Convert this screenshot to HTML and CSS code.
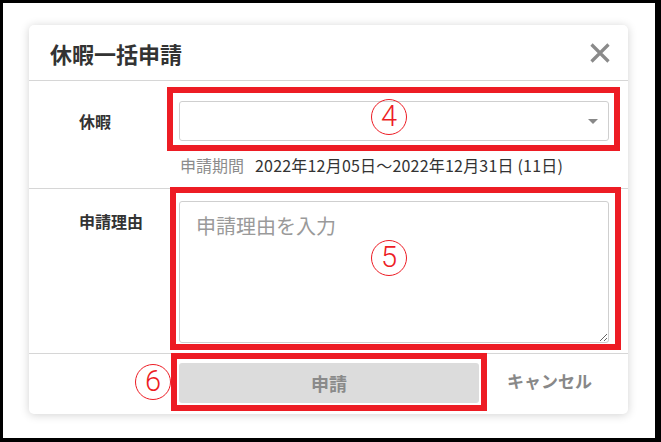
FILE: index.html
```html
<!DOCTYPE html>
<html lang="ja">
<head>
<meta charset="utf-8">
<title>休暇一括申請</title>
<link rel="stylesheet" href="styles.css">
</head>
<body>
<div class="frame">
  <div class="modal">
    <div class="modal-header">
      <h1 class="modal-title">休暇一括申請</h1>
      <button class="close-btn" aria-label="閉じる">
        <svg width="20" height="20" viewBox="0 0 20 20"><path d="M1.5 1.5 L18.5 18.5 M18.5 1.5 L1.5 18.5" stroke="#8a8a8a" stroke-width="3.2" fill="none"/></svg>
      </button>
    </div>
    <div class="row row-leave">
      <div class="label">休暇</div>
      <div class="field">
        <div class="select-wrap">
          <div class="select"><span class="caret"></span></div>
          <span class="mark-box mark-box-4"></span>
          <span class="mark-num mark-num-4">4</span>
        </div>
        <div class="period"><span class="period-label">申請期間</span><span class="period-value">2022年12月05日～2022年12月31日 (11日)</span></div>
      </div>
    </div>
    <div class="row row-reason">
      <div class="label">申請理由</div>
      <div class="field">
        <div class="textarea-wrap">
          <textarea class="reason" placeholder="申請理由を入力"></textarea>
          <span class="mark-box mark-box-5"></span>
          <span class="mark-num mark-num-5">5</span>
        </div>
      </div>
    </div>
    <div class="modal-footer">
      <div class="submit-wrap">
        <button class="submit-btn">申請</button>
        <span class="mark-box mark-box-6"></span>
        <span class="mark-num mark-num-6">6</span>
      </div>
      <button class="cancel-btn">キャンセル</button>
    </div>
  </div>
</div>
</body>
</html>
```
FILE: styles.css
```css
html, body {
  margin: 0;
  padding: 0;
  background: #fff;
}
body {
  font-family: "Noto Sans CJK JP", "Noto Sans", sans-serif;
  color: #333;
}
.frame {
  box-sizing: border-box;
  width: 661px;
  height: 442px;
  border-style: solid;
  border-color: #000;
  border-width: 3px 6px 4px 3px;
  padding: 22px 0 0 26px;
  background: #fff;
  overflow: hidden;
}
.modal {
  width: 599px;
  background: #fff;
  border-radius: 5px;
  box-shadow: 0 1px 10px rgba(0, 0, 0, 0.18);
}
.modal-header {
  height: 55px;
  display: flex;
  align-items: center;
  justify-content: space-between;
  padding: 0 18px 0 21px;
  border-bottom: 1px solid #d6d6d6;
}
.modal-title {
  margin: 0;
  font-size: 22px;
  font-weight: 700;
  color: #333;
  line-height: 30px;
}
.close-btn {
  border: 0;
  background: none;
  padding: 0;
  width: 20px;
  height: 20px;
  display: block;
}
.close-btn svg { display: block; }
.row {
  display: grid;
  grid-template-columns: 100px 430px;
  padding: 0 19px 0 50px;
  border-bottom: 1px solid #d6d6d6;
}
.row-leave { padding-top: 20px; padding-bottom: 11px; }
.row-reason { padding-top: 12px; padding-bottom: 10px; }
.label {
  font-size: 16px;
  font-weight: 700;
  line-height: 40px;
  color: #333;
}
.select-wrap, .textarea-wrap, .submit-wrap {
  position: relative;
}
.select {
  box-sizing: border-box;
  height: 40px;
  border: 1px solid #cfcfcf;
  border-radius: 3px;
  background: #fff;
  position: relative;
}
.caret {
  position: absolute;
  right: 10px;
  top: 17px;
  width: 0;
  height: 0;
  border-left: 5px solid transparent;
  border-right: 5px solid transparent;
  border-top: 5px solid #888;
}
.period {
  margin-top: 12px;
  line-height: 24px;
  font-size: 16px;
  padding-left: 1px;
  white-space: nowrap;
}
.period-label { color: #8c8c8c; margin-right: 11px; }
.period-value { color: #333; letter-spacing: 0.2px; }
.reason {
  display: block;
  box-sizing: border-box;
  width: 430px;
  height: 142px;
  margin: 0;
  border: 1px solid #cfcfcf;
  border-radius: 3px;
  padding: 9px 16px;
  font-family: "Noto Sans CJK JP", "Noto Sans", sans-serif;
  font-size: 20px;
  line-height: 30px;
  color: #333;
  background: #fff;
  resize: vertical;
  outline: none;
}
.reason::placeholder { color: #9a9a9a; }
.modal-footer {
  display: flex;
  align-items: center;
  gap: 28px;
  padding: 9px 0 11px 150px;
}
.submit-btn {
  display: block;
  width: 300px;
  height: 40px;
  border: 0;
  border-radius: 3px;
  background: #dcdcdc;
  color: #8a8a8a;
  font-family: "Noto Sans CJK JP", "Noto Sans", sans-serif;
  font-size: 18px;
  font-weight: 700;
  padding: 0;
}
.cancel-btn {
  border: 0;
  background: none;
  padding: 0;
  color: #888;
  font-family: "Noto Sans CJK JP", "Noto Sans", sans-serif;
  font-size: 17px;
  font-weight: 700;
  line-height: 30px;
  margin-top: -4px;
}
/* annotation overlays */
.mark-box {
  position: absolute;
  border: 6px solid #ed1c24;
  pointer-events: none;
}
.mark-box-4 { left: -12px; right: -11px; top: -14px; bottom: -10px; }
.mark-box-5 { left: -9px; right: -12px; top: -14px; bottom: -7px; }
.mark-box-6 { left: -8px; right: -8px; top: -10px; bottom: -8px; }
.mark-num {
  position: absolute;
  box-sizing: border-box;
  width: 36px;
  height: 36px;
  border: 1.5px solid #ed1c24;
  border-radius: 50%;
  color: #ed1c24;
  font-family: Roboto, "Liberation Sans", sans-serif;
  font-weight: 300;
  font-size: 29px;
  line-height: 33px;
  text-align: center;
}
.mark-num-4 { left: 192px; top: -2px; }
.mark-num-5 { left: 192px; top: 39px; }
.mark-num-6 { left: -44px; top: 1px; }
```
